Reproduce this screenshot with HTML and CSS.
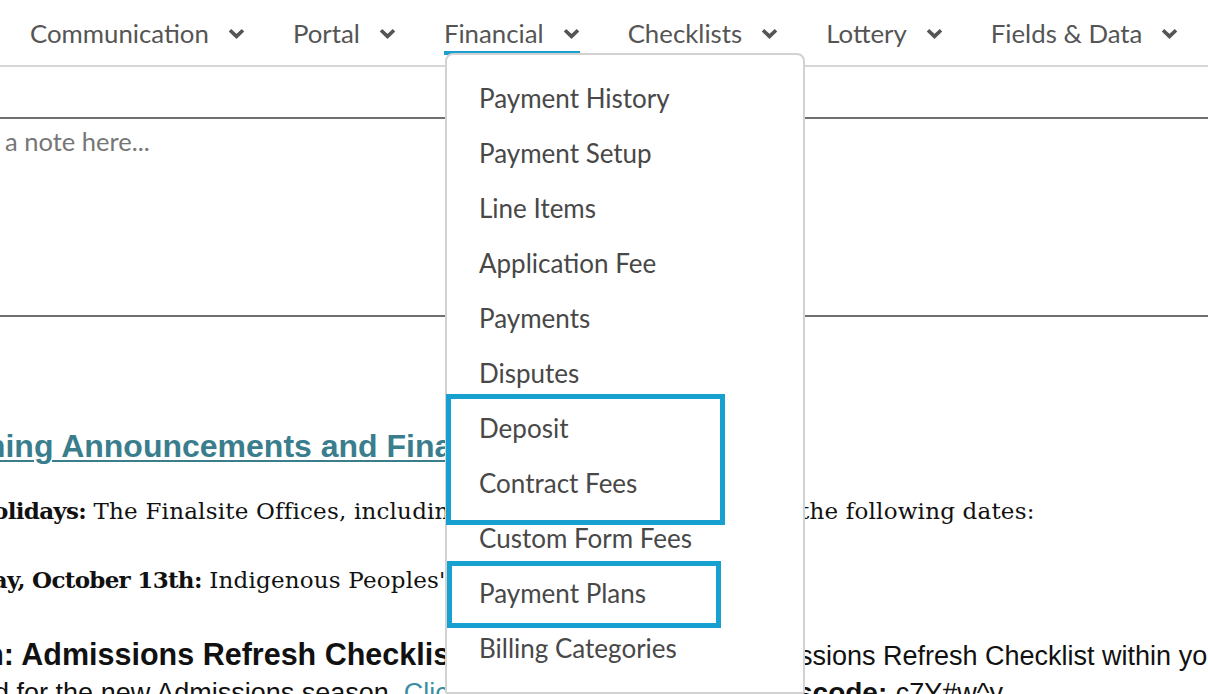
FILE: index.html
```html
<!DOCTYPE html>
<html lang="en">
<head>
<meta charset="utf-8">
<title>Financial menu</title>
<link rel="stylesheet" href="styles.css">
</head>
<body>
<header class="nav">
  <div class="nav-item"><span>Communication</span><svg class="chev" viewBox="0 0 17 11"><path d="M2 2.2 L8.5 8.4 L15 2.2"/></svg></div>
  <div class="nav-item"><span>Portal</span><svg class="chev" viewBox="0 0 17 11"><path d="M2 2.2 L8.5 8.4 L15 2.2"/></svg></div>
  <div class="nav-item active"><span>Financial</span><svg class="chev" viewBox="0 0 17 11"><path d="M2 2.2 L8.5 8.4 L15 2.2"/></svg></div>
  <div class="nav-item"><span>Checklists</span><svg class="chev" viewBox="0 0 17 11"><path d="M2 2.2 L8.5 8.4 L15 2.2"/></svg></div>
  <div class="nav-item"><span>Lottery</span><svg class="chev" viewBox="0 0 17 11"><path d="M2 2.2 L8.5 8.4 L15 2.2"/></svg></div>
  <div class="nav-item"><span>Fields &amp; Data</span><svg class="chev" viewBox="0 0 17 11"><path d="M2 2.2 L8.5 8.4 L15 2.2"/></svg></div>
</header>

<div class="toolbar"></div>
<div class="note"><div class="placeholder">Add a note here...</div></div>

<main class="content">
  <h2 class="headline"><a href="#">Upcoming Announcements and Finalsite Holidays</a></h2>

  <div class="row serif r1">
    <div class="left"><b>Holidays:</b> The Finalsite Offices, including our support team, will be closed on</div>
    <div class="right">the following dates:</div>
  </div>

  <div class="row serif r2">
    <div class="left"><b>Monday, October 13th:</b> Indigenous Peoples' Day</div>
  </div>

  <div class="row sans r3">
    <div class="left"><b>Attention: Admissions Refresh Checklist</b> <span class="reg">– Be sure to complete the Admi</span></div>
    <div class="right"><span class="reg">ssions Refresh Checklist within your</span></div>
  </div>

  <div class="row sans r4">
    <div class="left"><span class="reg">prepared for the new Admissions season. <a href="#">Click here</a> to view it. Pas</span></div>
    <div class="right"><b class="reg-b">scode:</b> <span class="reg">c7Y#w^y</span></div>
  </div>
</main>

<nav class="dropdown">
  <div class="dd-item">Payment History</div>
  <div class="dd-item">Payment Setup</div>
  <div class="dd-item">Line Items</div>
  <div class="dd-item">Application Fee</div>
  <div class="dd-item">Payments</div>
  <div class="dd-item">Disputes</div>
  <div class="dd-item">Deposit</div>
  <div class="dd-item">Contract Fees</div>
  <div class="dd-item">Custom Form Fees</div>
  <div class="dd-item">Payment Plans</div>
  <div class="dd-item">Billing Categories</div>
</nav>

<div class="mark mark-a"></div>
<div class="mark mark-b"></div>
</body>
</html>
```

FILE: styles.css
```css
html, body {
  margin: 0;
  padding: 0;
  height: 100%;
  overflow: hidden;
  background: #ffffff;
}

body {
  position: relative;
  font-family: Lato, "Noto Sans", sans-serif;
  color: #111;
}

/* top navigation */
.nav {
  display: flex;
  align-items: flex-start;
  gap: 48px;
  padding-left: 30px;
  height: 65px;
  border-bottom: 2px solid #d6d6d6;
}

.nav-item {
  display: flex;
  align-items: center;
  gap: 19px;
  padding-top: 18px;
  padding-bottom: 2px;
  border-bottom: 4px solid transparent;
  font-size: 25.8px;
  line-height: 31px;
  color: #555555;
  white-space: nowrap;
}

.nav-item.active {
  border-bottom-color: #1a9fcf;
}

.chev {
  width: 17px;
  height: 11px;
  flex: none;
}

.chev path {
  fill: none;
  stroke: #555555;
  stroke-width: 3.6;
  stroke-linecap: butt;
  stroke-linejoin: miter;
}

/* note editor */
.toolbar {
  height: 50px;
  border-bottom: 2px solid #707070;
}

.note {
  height: 196px;
  border-bottom: 2px solid #707070;
}

.placeholder {
  padding-top: 7px;
  font-size: 25.5px;
  line-height: 30px;
  color: #767676;
  text-indent: -47px;
  white-space: nowrap;
}

/* announcement content */
.headline {
  margin: 111px 0 0;
  font-family: "Liberation Sans", Arial, sans-serif;
  font-weight: bold;
  font-size: 32px;
  line-height: 36px;
  white-space: nowrap;
  text-indent: -103px;
}

.headline a {
  color: #3a7e8e;
  text-decoration: underline;
  text-decoration-thickness: 2px;
  text-underline-offset: 3px;
}

.row {
  display: flex;
  align-items: baseline;
  white-space: nowrap;
}

.row .left {
  flex: none;
  overflow: hidden;
}

.row .right {
  flex: none;
}

.serif {
  font-family: "DejaVu Serif", "Liberation Serif", serif;
  font-size: 23px;
  line-height: 30px;
  letter-spacing: 0.2px;
  color: #111111;
}

.serif b {
  letter-spacing: -0.7px;
}

.r1 {
  margin-top: 32px;
}

.r1 .left {
  width: 800px;
  text-indent: -28px;
}

.r2 {
  margin-top: 39px;
}

.r2 .left {
  width: 800px;
  text-indent: -78px;
}

.sans {
  font-family: "Liberation Sans", Arial, sans-serif;
  font-size: 30.5px;
  line-height: 35px;
  color: #111111;
}

.sans .reg {
  font-size: 27px;
}

.sans .reg-b {
  font-size: 28px;
}

.r3 {
  margin-top: 42px;
}

.r3 .left {
  width: 799px;
  text-indent: -130px;
}

.r4 .left {
  width: 797px;
  text-indent: -99px;
}

.r4 a {
  color: #3a8ea0;
  text-decoration: none;
}

/* financial dropdown menu (overlay) */
.dropdown {
  position: absolute;
  left: 445px;
  top: 53px;
  width: 360px;
  height: 641px;
  box-sizing: border-box;
  padding-top: 16px;
  background: #ffffff;
  border: 2px solid #d2d2d2;
  border-radius: 8px 8px 2px 2px;
  z-index: 2;
}

.dd-item {
  height: 55px;
  line-height: 55px;
  padding-left: 32px;
  font-size: 26px;
  color: #484848;
  white-space: nowrap;
}

/* annotation highlight boxes */
.mark {
  position: absolute;
  box-sizing: border-box;
  border: 5px solid #18a0d0;
  z-index: 3;
}

.mark-a {
  left: 446px;
  top: 394px;
  width: 279px;
  height: 131px;
}

.mark-b {
  left: 447px;
  top: 561px;
  width: 274px;
  height: 67px;
}
```
